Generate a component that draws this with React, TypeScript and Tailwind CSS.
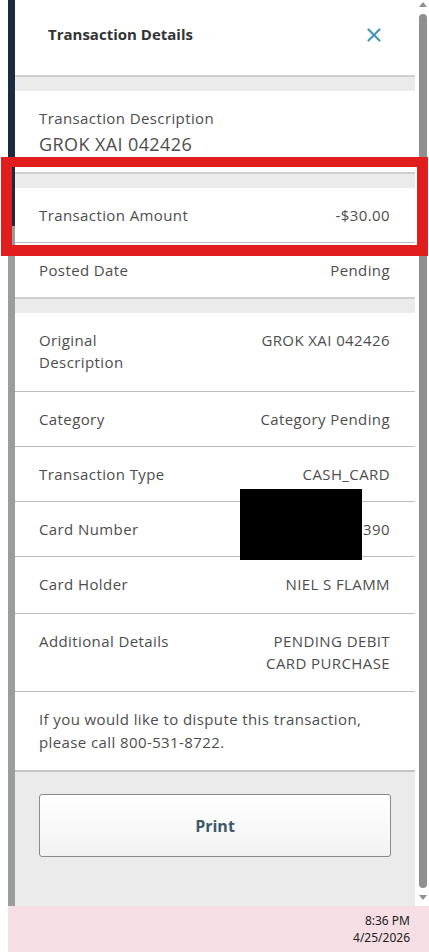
import { X } from "lucide-react";

const rows = [
  { label: ["Original", "Description"], value: ["GROK XAI 042426"], pb: "pb-[18px]" },
  { label: ["Category"], value: ["Category Pending"] },
  { label: ["Transaction Type"], value: ["CASH_CARD"] },
  { label: ["Card Number"], value: ["390"], redacted: true },
  { label: ["Card Holder"], value: ["NIEL S FLAMM"], pb: "pb-[18px]" },
  { label: ["Additional Details"], value: ["PENDING DEBIT", "CARD PURCHASE"], pb: "pb-[17px]" },
];

const font = { fontFamily: '"Open Sans", "Liberation Sans", sans-serif' };

function Band() {
  return <div className="h-[16px] border-t-2 border-[#cfcfcf] bg-[#ebebeb]" />;
}

function Row({ label, value, redacted, pb = "pb-[16px]" }: { label: string[]; value: string[]; redacted?: boolean; pb?: string }) {
  return (
    <div className={`relative flex justify-between border-b border-[#bdbdbd] pl-[24px] pr-[25px] pt-[16px] ${pb} text-[15px] leading-[22px] tracking-[0.4px] text-[#4d4d4d]`}>
      <div>
        {label.map((l) => (
          <div key={l}>{l}</div>
        ))}
      </div>
      <div className="text-right">
        {value.map((v) => (
          <div key={v}>{v}</div>
        ))}
      </div>
      {redacted && <div className="absolute left-[225px] top-[-13px] h-[71px] w-[122px] bg-black" />}
    </div>
  );
}

export default function App() {
  return (
    <div className="relative flex h-[952px] w-[429px] overflow-hidden bg-white" style={font}>
      <div className="w-[8px] shrink-0 bg-white" />
      <div className="flex w-[421px] flex-col">
        <div className="flex h-[906px]">
          {/* backdrop strip */}
          <div className="flex w-[7px] flex-col">
            <div className="h-[226px] bg-[#1c2b3f]" />
            <div className="flex-1 bg-[#9a9d9d]" />
          </div>

          {/* panel */}
          <div className="flex w-[400px] flex-col bg-white">
            <div className="flex h-[75px] items-center justify-between pb-[6px] pl-[33px] pr-[30px]">
              <h2 className="text-[15px] font-bold text-[#333]">Transaction Details</h2>
              <X className="h-[22px] w-[22px] text-[#4a98b5]" strokeWidth={2.5} />
            </div>
            <Band />

            <div className="pl-[24px] pr-[25px] pt-[16px] pb-[15px] tracking-[0.4px] text-[#4d4d4d]">
              <div className="text-[15px] leading-[22px]">Transaction Description</div>
              <div className="mt-[2px] text-[18px] leading-[26px]">GROK XAI 042426</div>
            </div>
            <Band />

            <Row label={["Transaction Amount"]} value={["-$30.00"]} />
            <div className="flex justify-between pl-[24px] pr-[25px] pt-[16px] pb-[16px] text-[15px] leading-[22px] tracking-[0.4px] text-[#4d4d4d]">
              <span>Posted Date</span>
              <span>Pending</span>
            </div>
            <Band />

            {rows.map((r) => (
              <Row key={r.label.join(" ")} label={r.label} value={r.value} redacted={r.redacted} pb={r.pb} />
            ))}

            <div className="pl-[24px] pr-[25px] pt-[16px] pb-[16px] text-[15px] leading-[23px] tracking-[0.4px] text-[#4d4d4d]">
              If you would like to dispute this transaction,
              <br />
              please call 800-531-8722.
            </div>

            <div className="flex-1 border-t-2 border-[#c4c4c4] bg-[#ebebeb] px-[24px] pt-[22px]">
              <button className="flex h-[63px] w-[352px] items-center justify-center rounded-[3px] border border-[#8a8a8a] bg-gradient-to-b from-white to-[#f3f3f3] text-[16px] font-bold text-[#3d5a6b]">
                Print
              </button>
            </div>
          </div>

          {/* scrollbar */}
          <div className="flex w-[14px] flex-col items-center bg-white pt-[2px] pb-[6px]">
            <div className="ml-[2px] h-0 w-0 border-x-[4px] border-b-[5px] border-x-transparent border-b-[#8f8f8f]" />
            <div className="ml-[2px] mt-[7px] w-[8px] flex-1 rounded-full bg-[#8f8f8f]" />
            <div className="ml-[2px] mt-[7px] h-0 w-0 border-x-[4px] border-t-[5px] border-x-transparent border-t-[#8f8f8f]" />
          </div>
        </div>

        {/* taskbar */}
        <div className="flex h-[46px] flex-col items-end justify-center bg-[#f5dfe4] pr-[19px] text-[12px] leading-[17px] text-[#222]" style={{ fontFamily: '"Noto Sans", "Liberation Sans", sans-serif' }}>
          <div>8:36 PM</div>
          <div>4/25/2026</div>
        </div>
      </div>

      {/* annotation */}
      <div className="absolute left-[1px] top-[157px] h-[99px] w-[427px] border-[11px] border-t-[10px] border-[#e01e1e]" />
    </div>
  );
}
